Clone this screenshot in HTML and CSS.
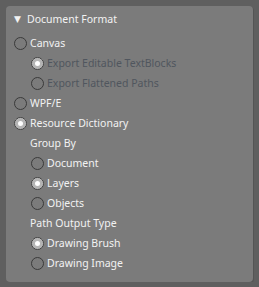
FILE: index.html
```html
<!DOCTYPE html>
<html lang="en">
<head>
    <title>Document Format</title>
    <link rel="stylesheet" href="styles.css">
</head>
<body>
    <div class="panou">
        <div class="titlu"><span class="sageata">&#9660;</span>Document Format</div>
        <div class="rand"><span class="radio"></span>Canvas</div>
        <div class="rand sub dezactivat"><span class="radio bifat"></span>Export Editable TextBlocks</div>
        <div class="rand sub dezactivat"><span class="radio"></span>Export Flattened Paths</div>
        <div class="rand"><span class="radio"></span>WPF/E</div>
        <div class="rand"><span class="radio bifat"></span>Resource Dictionary</div>
        <div class="rand eticheta">Group By</div>
        <div class="rand sub"><span class="radio"></span>Document</div>
        <div class="rand sub"><span class="radio bifat"></span>Layers</div>
        <div class="rand sub"><span class="radio"></span>Objects</div>
        <div class="rand eticheta">Path Output Type</div>
        <div class="rand sub"><span class="radio bifat"></span>Drawing Brush</div>
        <div class="rand sub"><span class="radio"></span>Drawing Image</div>
    </div>
</body>
</html>
```

FILE: styles.css
```css
body {
    margin: 0;
    background-color: #5f5f5f;
    font-family: "Noto Sans", "Open Sans", sans-serif;
    font-size: 10.5px;
    color: #f2f2f2;
}

.panou {
    margin: 6px 0 0 6px;
    width: 247px;
    height: 276px;
    box-sizing: border-box;
    background-color: #7b7b7b;
    border-radius: 4px;
    box-shadow: 1px 1px 0 #555;
    padding: 3px 0 0 8px;
}

.titlu {
    height: 18px;
    display: flex;
    align-items: center;
    padding-top: 1px;
}

.sageata {
    font-family: "DejaVu Sans", sans-serif;
    font-size: 9px;
    width: 13px;
}

.rand {
    height: 20px;
    display: flex;
    align-items: center;
}

.titlu + .rand {
    margin-top: 5px;
}

.sub {
    padding-left: 17px;
}

.eticheta {
    padding-left: 16px;
}

.dezactivat {
    color: #50565e;
}

.radio {
    width: 11px;
    height: 11px;
    border: 1px solid #3a3a3a;
    border-radius: 50%;
    margin-right: 3px;
    flex-shrink: 0;
}

.radio.bifat {
    background-color: #ffffff;
    border-color: #3e3e3e;
    box-shadow: inset 0 0 0 3px #b4b4b4;
}
```
